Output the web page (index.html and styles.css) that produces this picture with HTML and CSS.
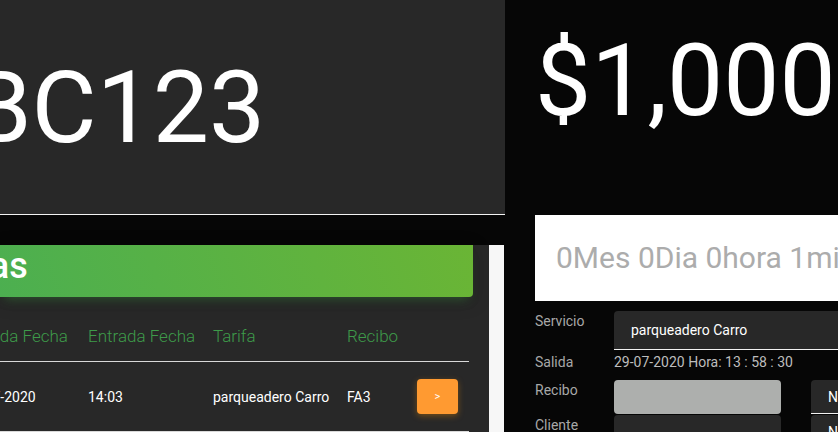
FILE: index.html
```html
<!DOCTYPE html>
<html lang="es">
<head>
<meta charset="utf-8">
<title>Salidas</title>
<link rel="stylesheet" href="styles.css">
</head>
<body>
<div class="page">
  <div class="left">
    <div class="plate"><span class="plate-text">ABC123</span></div>
    <div class="card-wrap">
      <div class="card">
        <div class="card-header"><h2 class="card-title">Salidas</h2></div>
        <div class="table">
          <div class="tr th">
            <div class="cell first-h">Salida Fecha</div>
            <div class="cell">Entrada Fecha</div>
            <div class="cell">Tarifa</div>
            <div class="cell">Recibo</div>
            <div class="cell"></div>
          </div>
          <div class="tr td">
            <div class="cell first-d">29-07-2020</div>
            <div class="cell">14:03</div>
            <div class="cell">parqueadero Carro</div>
            <div class="cell">FA3</div>
            <div class="cell"><button class="go">&gt;</button></div>
          </div>
        </div>
      </div>
      <div class="scroll"></div>
    </div>
  </div>
  <div class="right">
    <div class="amount">$1,000</div>
    <div class="elapsed">0Mes 0Dia 0hora 1minutos</div>
    <div class="form">
      <div class="label">Servicio</div>
      <div class="select">parqueadero Carro</div>
      <div class="label lab2">Salida</div>
      <div class="value">29-07-2020 Hora: 13 : 58 : 30</div>
      <div class="label">Recibo</div>
      <div class="recibo"></div>
      <div class="nbox">N</div>
      <div class="label">Cliente</div>
      <div class="cliente">Consumidor final</div>
      <div class="nbox nbox2">N</div>
    </div>
  </div>
</div>
</body>
</html>
```
FILE: styles.css
```css
* { box-sizing: border-box; }
html, body { margin: 0; padding: 0; }
body {
  background: #060606;
  font-family: Roboto, "Liberation Sans", sans-serif;
  width: 838px;
  height: 432px;
  overflow: hidden;
}
.page {
  display: grid;
  grid-template-columns: 505px 333px;
  height: 432px;
}
.left { overflow: hidden; }
.plate {
  height: 215px;
  background: #282828;
  border-bottom: 1px solid #f2f2f2;
  padding-top: 58px;
  overflow: hidden;
  white-space: nowrap;
}
.plate-text {
  display: block;
  font-size: 100px;
  line-height: 100px;
  color: #fff;
  margin-left: -96px;
}
.card-wrap {
  margin-top: 30px;
  display: flex;
  height: 187px;
}
.card {
  width: 489px;
  background: #282828;
  padding-right: 16px;
}
.scroll {
  width: 15px;
  background: #f7f7f7;
}
.card-header {
  height: 52px;
  width: 473px;
  background: linear-gradient(70deg, #4caf50, #6ab535);
  border-radius: 0 0 4px 0;
  box-shadow: 0 4px 18px 0 rgba(0,0,0,.25), 0 7px 10px -5px rgba(76,175,80,.45);
  overflow: hidden;
}
.card-title {
  margin: 0 0 0 -90px;
  font-size: 36px;
  font-weight: 500;
  line-height: 42px;
  color: #fff;
  white-space: nowrap;
}
.table { width: 469px; margin-top: 20px; }
.tr {
  display: grid;
  grid-template-columns: 88px 125px 134px 70px 52px;
  align-items: center;
  white-space: nowrap;
}
.th {
  height: 45px;
  border-bottom: 1px solid #d9d9d9;
  font-size: 17px;
  font-weight: 300;
  color: #3e9b4a;
  padding-bottom: 6px;
}
.td {
  height: 70px;
  border-bottom: 1px solid #d9d9d9;
  font-size: 14px;
  color: #fff;
}
.first-h { margin-left: -27px; }
.first-d { margin-left: -35px; }
.go {
  width: 41px;
  height: 35px;
  border: 0;
  border-radius: 4px;
  background: #ff9a31;
  color: #fff;
  font-family: Roboto, sans-serif;
  font-size: 11px;
  padding: 0;
  box-shadow: 0 2px 6px rgba(255,152,0,.35);
}
.right {
  padding-left: 30px;
  overflow: hidden;
}
.amount {
  height: 215px;
  padding-top: 31px;
  font-size: 100px;
  line-height: 100px;
  color: #fff;
  white-space: nowrap;
}
.elapsed {
  height: 86px;
  width: 320px;
  background: #fff;
  color: #acacac;
  font-size: 30px;
  line-height: 86px;
  padding-left: 21px;
  white-space: nowrap;
  overflow: hidden;
}
.form {
  margin-top: 10px;
  display: grid;
  grid-template-columns: 79px 167px 30px 40px;
  grid-template-rows: 39px 30px 35px 30px;
  font-size: 14px;
}
.label {
  color: #a8a8a8;
  font-size: 14px;
  line-height: 18px;
  padding-top: 1px;
}
.select {
  grid-column: 2 / 5;
  background: #282828;
  border-radius: 4px 0 0 0;
  border-bottom: 1px solid #f2f2f2;
  color: #fff;
  padding-left: 17px;
  line-height: 38px;
  white-space: nowrap;
}
.lab2 { padding-top: 3px; }
.value {
  grid-column: 2 / 5;
  color: #bdbdbd;
  line-height: 20px;
  padding-top: 2px;
  white-space: nowrap;
}
.recibo {
  height: 34px;
  background: #adafad;
  border-radius: 4px;
}
.nbox {
  grid-column: 4;
  height: 34px;
  background: #282828;
  border-bottom: 1px solid #f2f2f2;
  border-radius: 4px 0 0 0;
  color: #fff;
  padding-left: 17px;
  line-height: 34px;
}
.nbox2 { border-bottom: 0; }
.cliente {
  background: #282828;
  border-radius: 4px 4px 0 0;
  color: #fff;
  text-align: center;
  padding-top: 17px;
  white-space: nowrap;
}
```
